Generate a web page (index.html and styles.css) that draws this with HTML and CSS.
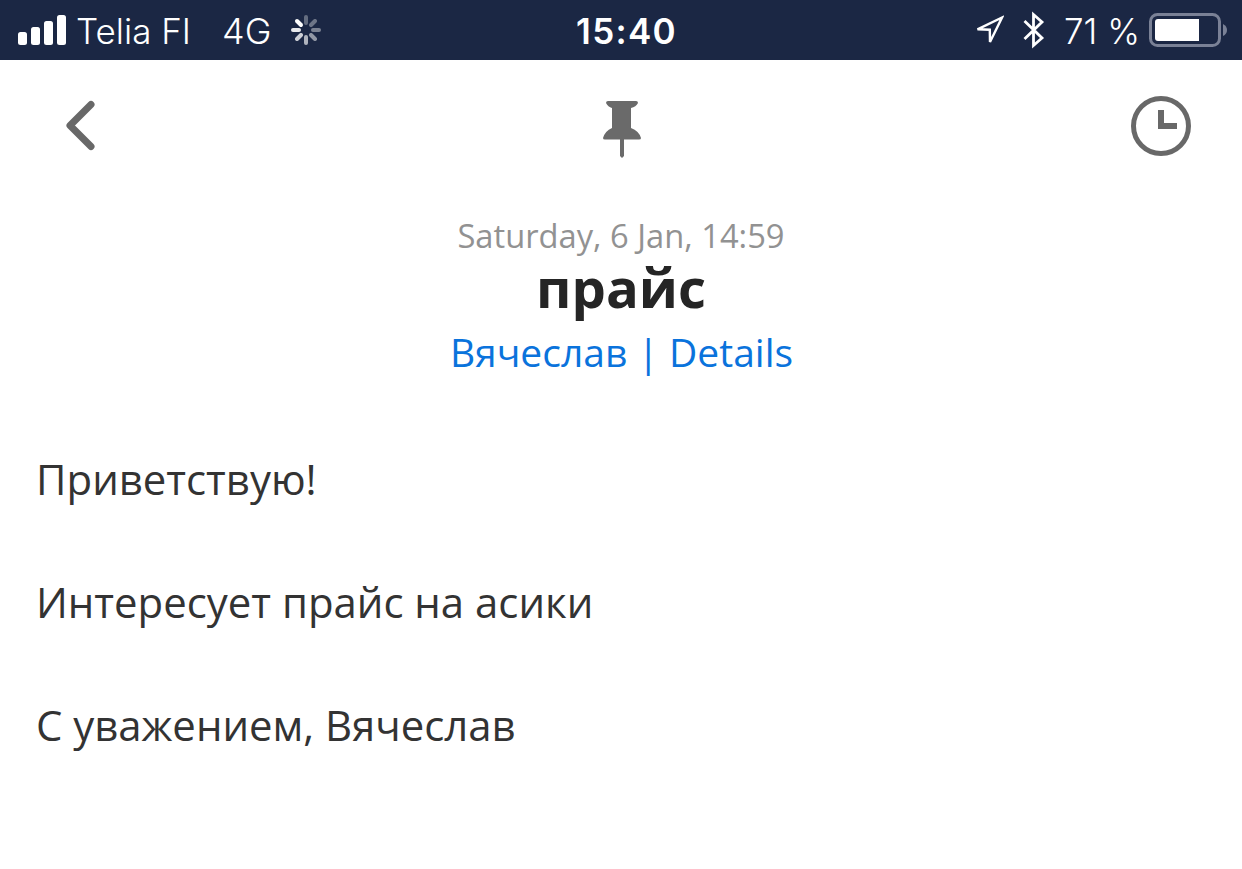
FILE: index.html
```
<!DOCTYPE html>
<html lang="ru">
<head>
  <meta charset="UTF-8" />
  <meta name="viewport" content="width=device-width, initial-scale=1.0" />
  <title>прайс</title>
  <link rel="stylesheet" href="styles.css">
</head>
<body>
  <div class="status-bar">
    <div class="status-left">
      <svg class="signal" width="48" height="30" viewBox="0 0 48 30" fill="#fff">
        <rect x="0" y="17" width="9" height="13" rx="2.5" />
        <rect x="13" y="12" width="9" height="18" rx="2.5" />
        <rect x="26" y="6" width="9" height="24" rx="2.5" />
        <rect x="39" y="0" width="9" height="30" rx="2.5" />
      </svg>
      <span class="carrier">Telia FI</span>
      <span class="network">4G</span>
      <svg class="spinner" width="30" height="30" viewBox="-15 -15 30 30" stroke="#fff" stroke-width="4" stroke-linecap="round">
        <path d="M0-7V-13" opacity=".32" />
        <path d="M5-5L9-9" opacity=".36" />
        <path d="M7 0H13" opacity=".42" />
        <path d="M5 5L9 9" opacity=".52" />
        <path d="M0 7V13" opacity=".65" />
        <path d="M-5 5L-9 9" opacity=".78" />
        <path d="M-7 0H-13" opacity=".9" />
        <path d="M-5-5L-9-9" />
      </svg>
    </div>
    <div class="clock">15:40</div>
    <div class="status-right">
      <svg class="location" width="30" height="30" viewBox="0 0 30 30" fill="none" stroke="#fff" stroke-width="2.4">
        <path d="M28 2.5L3.5 14.3L15.8 14.7L16 27Z" />
      </svg>
      <svg class="bluetooth" width="22" height="38" viewBox="0 0 22 38" fill="none" stroke="#fff" stroke-width="2.8">
        <path d="M1.5 10L19 27L10.5 34.5V3.5L19 11L1.5 28" />
      </svg>
      <span class="percent">71 %</span>
      <svg class="battery" width="78" height="34" viewBox="0 0 78 34">
        <rect x="1.5" y="1.5" width="69" height="31" rx="7" fill="none" stroke="#7a8196" stroke-width="3" />
        <path d="M9 6H50V28H9Q6 28 6 25V9Q6 6 9 6Z" fill="#fff" />
        <path d="M74 11Q78 13 78 17T74 23Z" fill="#7a8196" />
      </svg>
    </div>
  </div>

  <nav class="toolbar">
    <svg class="back" width="34" height="54" viewBox="0 0 34 54" fill="none" stroke="#686868" stroke-width="7" stroke-linecap="round" stroke-linejoin="round">
      <path d="M27 5.5L6 26.5L27 47.5" />
    </svg>
    <svg class="pin" width="38" height="58" viewBox="0 0 38 58" fill="#6a6a6a">
      <path d="M5 1H33Q35 1 35 3Q33 7 28 8V28Q36 31 38 38Q38 39.5 36 39.5H2Q0 39.5 0 38Q2 31 9 28V8Q5 7 3 3Q3 1 5 1Z" />
      <path d="M17 39H21V56L19 58L17 56Z" />
    </svg>
    <svg class="history" width="60" height="60" viewBox="0 0 60 60" fill="none" stroke="#686868">
      <circle cx="30" cy="30" r="27.5" stroke-width="5" />
      <path d="M30 14V30H46" stroke-width="6" />
    </svg>
  </nav>

  <header class="message-header">
    <p class="date">Saturday, 6 Jan, 14:59</p>
    <h1>прайс</h1>
    <p class="links"><a href="#">Вячеслав</a> | <a href="#">Details</a></p>
  </header>

  <main class="message-body">
    <p>Приветствую!</p>
    <p>Интересует прайс на асики</p>
    <p>С уважением, Вячеслав</p>
  </main>
</body>
</html>
```
FILE: styles.css
```
body {
  margin: 0;
  font-family: "Open Sans", "Noto Sans", sans-serif;
  background-color: #ffffff;
  color: #333333;
}
svg {
  display: block;
  flex: none;
}
h1,
p {
  margin: 0;
}
.status-bar {
  display: grid;
  grid-template-columns: 1fr auto 1fr;
  align-items: center;
  height: 60px;
  box-sizing: border-box;
  padding: 0 15px 0 18px;
  background-color: #1b2744;
  color: white;
  font-family: Inter, sans-serif;
  font-size: 35px;
  font-weight: 350;
  line-height: 60px;
  white-space: nowrap;
}
.status-left,
.status-right {
  display: flex;
  align-items: center;
}
.status-right {
  justify-content: flex-end;
}
.carrier,
.network,
.clock,
.percent {
  padding-top: 2px;
  line-height: 58px;
}
.carrier {
  width: 114px;
  margin-left: 10px;
}
.network {
  width: 49px;
  margin-left: 32px;
  font-size: 36px;
}
.spinner {
  margin-left: 20px;
}
.clock {
  padding-left: 8px;
  font-weight: 600;
  letter-spacing: 1.3px;
}
.bluetooth {
  margin-left: 19px;
}
.percent {
  width: 76px;
  margin-left: 19px;
}
.battery {
  margin-left: 9px;
}
.toolbar {
  display: grid;
  grid-template-columns: 1fr auto 1fr;
  align-items: center;
  height: 132px;
  padding: 0 51px 0 64px;
}
.pin {
  margin: 6px 11px 0 0;
}
.history {
  justify-self: end;
}
.message-header {
  padding-top: 21px;
  text-align: center;
}
.date {
  height: 53px;
  font-size: 32.7px;
  line-height: 46px;
  color: #929292;
}
h1 {
  height: 59px;
  overflow: hidden;
  font-size: 54.4px;
  line-height: 43px;
  color: #252525;
}
.links {
  padding-left: 1px;
  font-size: 39px;
  line-height: 54px;
  color: #0a73dc;
}
.links a {
  color: inherit;
  text-decoration: none;
}
.message-body {
  padding: 69px 36px 0;
  font-size: 41.9px;
  line-height: 61.5px;
}
.message-body p + p {
  margin-top: 61.5px;
}
```
